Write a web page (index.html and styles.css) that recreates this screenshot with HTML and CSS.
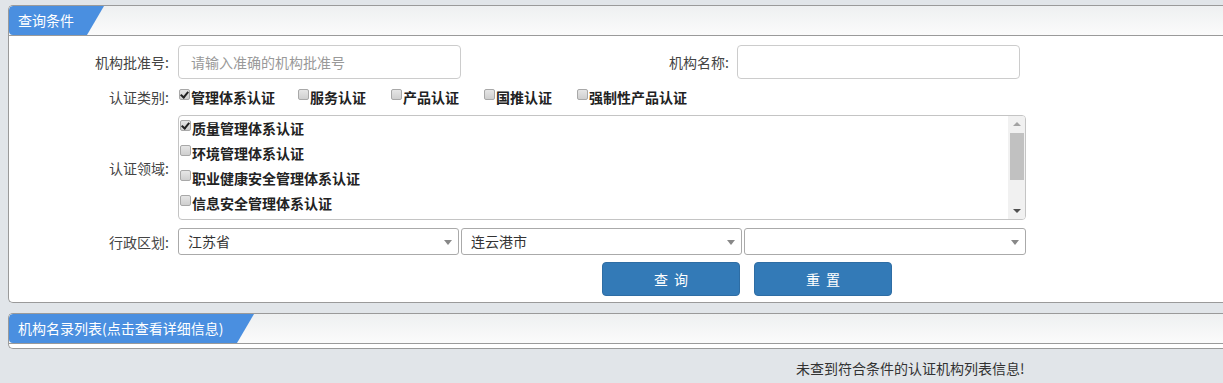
FILE: index.html
```html
<!DOCTYPE html>
<html lang="zh-CN">
  <head>
    <meta charset="utf-8" />
    <title>认证机构查询</title>
    <link rel="stylesheet" href="styles.css">
  </head>
  <body>
    <!-- 查询条件 -->
    <div class="panel">
      <div class="panel-head"><span class="tab">查询条件</span></div>
      <div class="panel-body">
        <div class="row row-inputs">
          <label class="lbl">机构批准号:</label>
          <div class="text-input placeholder">请输入准确的机构批准号</div>
          <label class="lbl lbl-wide">机构名称:</label>
          <div class="text-input"></div>
        </div>

        <div class="row row-types">
          <label class="lbl">认证类别:</label>
          <span class="chk"><i class="box checked"></i>管理体系认证</span>
          <span class="chk"><i class="box"></i>服务认证</span>
          <span class="chk"><i class="box"></i>产品认证</span>
          <span class="chk"><i class="box"></i>国推认证</span>
          <span class="chk"><i class="box"></i>强制性产品认证</span>
        </div>

        <div class="row row-fields">
          <label class="lbl">认证领域:</label>
          <div class="listbox">
            <div class="list-items">
              <div class="chk"><i class="box checked"></i>质量管理体系认证</div>
              <div class="chk"><i class="box"></i>环境管理体系认证</div>
              <div class="chk"><i class="box"></i>职业健康安全管理体系认证</div>
              <div class="chk"><i class="box"></i>信息安全管理体系认证</div>
            </div>
            <div class="scrollbar">
              <span class="arrow up"></span>
              <span class="thumb"></span>
              <span class="arrow down"></span>
            </div>
          </div>
        </div>

        <div class="row row-area">
          <label class="lbl">行政区划:</label>
          <div class="select">江苏省<span class="caret"></span></div>
          <div class="select">连云港市<span class="caret"></span></div>
          <div class="select select-last"><span class="caret"></span></div>
        </div>

        <div class="row row-btns">
          <button class="btn">查询</button>
          <button class="btn">重置</button>
        </div>
      </div>
    </div>

    <!-- 机构名录列表 -->
    <div class="panel panel-list">
      <div class="panel-head"><span class="tab tab-long">机构名录列表(点击查看详细信息)</span></div>
      <div class="panel-body list-body"></div>
    </div>

    <p class="empty">未查到符合条件的认证机构列表信息!</p>
  </body>
</html>
```

FILE: styles.css
```css
body{
  margin: 5px 0 0 8px;
  background-color: #e1e5e9;
  font-family: "Noto Sans CJK SC", "Liberation Sans", sans-serif;
  font-size: 14px;
  color: #333;
}

.panel{
  border: 1px solid #9a9a9a;
  border-right: none;
  border-radius: 5px 0 0 5px;
  background-color: #fff;
  overflow: hidden;
}

.panel-head{
  height: 29px;
  border-bottom: 1px solid #9a9a9a;
  background: linear-gradient(#eef0f1, #fbfbfb);
}

.tab{
  display: inline-block;
  width: 95px;
  height: 29px;
  line-height: 28px;
  padding-left: 9px;
  box-sizing: border-box;
  background-color: #4a8fe0;
  color: #fff;
  border-radius: 4px 0 0 4px;
  clip-path: polygon(0 0, 100% 0, calc(100% - 17px) 100%, 0 100%);
}

.tab-long{
  width: 245px;
}

.panel-body{
  padding: 9px 0 6px 0;
}

.row{
  display: flex;
  align-items: center;
}

.lbl{
  width: 160px;
  margin-right: 9px;
  text-align: right;
  color: #444;
}

.lbl-wide{
  width: 268px;
  margin-right: 8px;
}

.text-input{
  width: 283px;
  height: 34px;
  box-sizing: border-box;
  border: 1px solid #ccc;
  border-radius: 4px;
  padding-left: 12px;
  line-height: 32px;
}

.placeholder{
  color: #999;
}

.row-types{
  height: 26px;
  margin-top: 5px;
}

.chk{
  display: flex;
  align-items: center;
  font-weight: bold;
  color: #222;
  margin-right: 24px;
}

.row-types .lbl + .chk{
  margin-right: 22px;
}

/* old style grey checkbox */
.box{
  width: 11px;
  height: 11px;
  box-sizing: border-box;
  margin: 0 1px 0 1px;
  border: 1px solid #a8a8a8;
  border-radius: 2px;
  background: linear-gradient(#e6e6e6, #cfcfcf);
  position: relative;
  top: -3px;
}

.box.checked::after{
  content: "";
  position: absolute;
  left: 2px;
  top: 0px;
  width: 3px;
  height: 6px;
  border: solid #222;
  border-width: 0 2px 2px 0;
  transform: rotate(40deg);
}

.row-fields{
  margin-top: 5px;
}

.listbox{
  width: 848px;
  height: 105px;
  box-sizing: border-box;
  border: 1px solid #c4c4c4;
  border-radius: 4px;
  display: flex;
  overflow: hidden;
}

.list-items{
  flex: 1;
}

.list-items .chk{
  height: 25px;
  line-height: 25px;
}

.scrollbar{
  width: 17px;
  background-color: #f1f1f1;
  display: flex;
  flex-direction: column;
  align-items: center;
}

.thumb{
  width: 14px;
  height: 47px;
  background-color: #c1c1c1;
}

.arrow{
  width: 0;
  height: 0;
  border-left: 4px solid transparent;
  border-right: 4px solid transparent;
  margin: 6px 0;
}

.arrow.up{
  border-bottom: 4px solid #a3a3a3;
  margin-top: 6px;
  margin-bottom: 7px;
}

.arrow.down{
  border-top: 4px solid #505050;
  margin-top: auto;
  margin-bottom: 6px;
}

.row-area{
  margin-top: 8px;
}

.select{
  width: 281px;
  height: 27px;
  box-sizing: border-box;
  border: 1px solid #aaa;
  border-radius: 3px;
  padding-left: 9px;
  line-height: 25px;
  margin-right: 2px;
  color: #333;
  position: relative;
}

.select-last{
  width: 282px;
}

.caret{
  position: absolute;
  right: 6px;
  top: 11px;
  border-left: 4px solid transparent;
  border-right: 4px solid transparent;
  border-top: 5px solid #888;
}

.row-btns{
  margin-top: 7px;
  padding-left: 593px;
}

.btn{
  width: 138px;
  height: 34px;
  margin-right: 14px;
  border: 1px solid #2e6da4;
  border-radius: 4px;
  background-color: #337ab7;
  color: #fff;
  font-family: inherit;
  font-size: 14px;
  letter-spacing: 6px;
  text-indent: 6px;
  cursor: pointer;
}

.panel-list{
  margin-top: 10px;
}

.list-body{
  padding: 0;
  height: 4px;
}

.empty{
  margin: 9px 0 0 0;
  padding-left: 788px;
  color: #333;
}
```
